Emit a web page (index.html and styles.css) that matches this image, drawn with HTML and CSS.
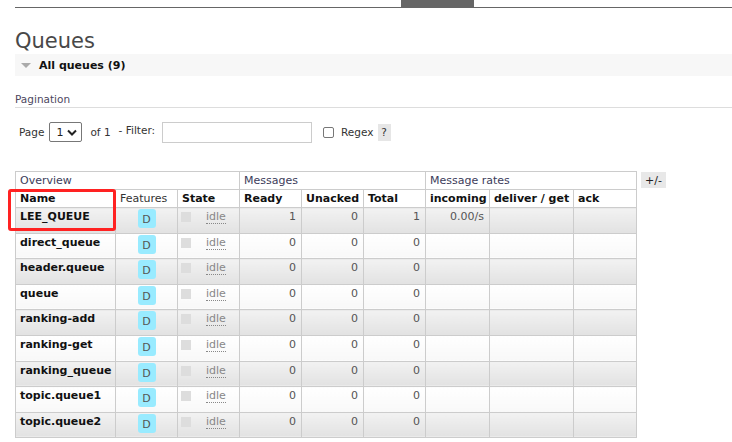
FILE: index.html
```html
<!DOCTYPE html>
<html>
<head>
<meta charset="utf-8">
<link rel="stylesheet" href="styles.css">
</head>
<body>
<div class="topnav"><span class="tab"></span></div>
<div class="main">
  <h1 class="title">Queues</h1>
  <div class="section-head"><span class="tri"></span><span>All queues (9)</span></div>
  <div class="pagination-title">Pagination</div>
  <div class="pager">
    <span>Page</span>
    <span class="select">1 <svg width="10" height="7" viewBox="0 0 10 7"><path d="M1 1.5 L5 5.5 L9 1.5" fill="none" stroke="#222" stroke-width="2"/></svg></span>
    <span class="of">of 1</span>
    <span class="flt">- Filter:</span>
    <span class="input"></span>
    <span class="check"></span>
    <span>Regex</span>
    <span class="help">?</span>
  </div>
  <div class="table-wrap">
    <table class="list">
      <colgroup>
        <col class="c-name"><col class="c-feat"><col class="c-state"><col class="c-num"><col class="c-num"><col class="c-num"><col class="c-inc"><col class="c-del"><col class="c-ack">
      </colgroup>
      <thead>
        <tr class="group"><th colspan="3">Overview</th><th colspan="3">Messages</th><th colspan="3">Message rates</th></tr>
        <tr class="cols"><th>Name</th><th class="light">Features</th><th>State</th><th>Ready</th><th>Unacked</th><th>Total</th><th>incoming</th><th>deliver / get</th><th>ack</th></tr>
      </thead>
      <tbody>
        <tr class="alt1"><td class="name">LEE_QUEUE</td><td class="feat"><span class="badge">D</span></td><td class="state"><span class="sq"></span><span class="idle">idle</span></td><td class="num">1</td><td class="num">0</td><td class="num">1</td><td class="num">0.00/s</td><td></td><td></td></tr>
        <tr class="alt2"><td class="name">direct_queue</td><td class="feat"><span class="badge">D</span></td><td class="state"><span class="sq"></span><span class="idle">idle</span></td><td class="num">0</td><td class="num">0</td><td class="num">0</td><td></td><td></td><td></td></tr>
        <tr class="alt1"><td class="name">header.queue</td><td class="feat"><span class="badge">D</span></td><td class="state"><span class="sq"></span><span class="idle">idle</span></td><td class="num">0</td><td class="num">0</td><td class="num">0</td><td></td><td></td><td></td></tr>
        <tr class="alt2"><td class="name">queue</td><td class="feat"><span class="badge">D</span></td><td class="state"><span class="sq"></span><span class="idle">idle</span></td><td class="num">0</td><td class="num">0</td><td class="num">0</td><td></td><td></td><td></td></tr>
        <tr class="alt1"><td class="name">ranking-add</td><td class="feat"><span class="badge">D</span></td><td class="state"><span class="sq"></span><span class="idle">idle</span></td><td class="num">0</td><td class="num">0</td><td class="num">0</td><td></td><td></td><td></td></tr>
        <tr class="alt2"><td class="name">ranking-get</td><td class="feat"><span class="badge">D</span></td><td class="state"><span class="sq"></span><span class="idle">idle</span></td><td class="num">0</td><td class="num">0</td><td class="num">0</td><td></td><td></td><td></td></tr>
        <tr class="alt1"><td class="name">ranking_queue</td><td class="feat"><span class="badge">D</span></td><td class="state"><span class="sq"></span><span class="idle">idle</span></td><td class="num">0</td><td class="num">0</td><td class="num">0</td><td></td><td></td><td></td></tr>
        <tr class="alt2"><td class="name">topic.queue1</td><td class="feat"><span class="badge">D</span></td><td class="state"><span class="sq"></span><span class="idle">idle</span></td><td class="num">0</td><td class="num">0</td><td class="num">0</td><td></td><td></td><td></td></tr>
        <tr class="alt1"><td class="name">topic.queue2</td><td class="feat"><span class="badge">D</span></td><td class="state"><span class="sq"></span><span class="idle">idle</span></td><td class="num">0</td><td class="num">0</td><td class="num">0</td><td></td><td></td><td></td></tr>
      </tbody>
    </table>
    <span class="plusminus">+/-</span>
    <div class="highlight"></div>
  </div>
</div>
</body>
</html>
```

FILE: styles.css
```css
html, body {
  margin: 0;
  padding: 0;
  background: #fff;
}
body {
  font-family: "DejaVu Sans", Verdana, sans-serif;
  font-size: 11px;
  color: #484848;
}
.topnav {
  margin-left: 15px;
  height: 7px;
  border-bottom: 1px solid #666;
  display: flex;
}
.topnav .tab {
  margin-left: 386px;
  width: 73px;
  height: 7px;
  background: #666;
}
.main {
  padding-left: 15px;
}
.title {
  margin: 0;
  padding-top: 19px;
  font-size: 21px;
  line-height: 28px;
  font-weight: normal;
  color: #484848;
  height: 27px;
}
.section-head {
  height: 22px;
  background: #f7f7f7;
  display: flex;
  align-items: center;
  font-weight: bold;
  color: #111;
  font-size: 11px;
}
.tri {
  width: 0;
  height: 0;
  border-left: 5px solid transparent;
  border-right: 5px solid transparent;
  border-top: 5px solid #aaa;
  margin-left: 6px;
  margin-right: 8px;
}
.pagination-title {
  margin-top: 16px;
  font-size: 10.5px;
  line-height: 14px;
  color: #4d4760;
  border-bottom: 1px solid #ddd;
  padding-bottom: 1px;
}
.pager {
  display: flex;
  align-items: center;
  margin-top: 13px;
  padding-left: 4px;
  font-size: 10.5px;
  color: #333;
  height: 22px;
}
.select {
  margin-left: 5px;
  border: 1px solid #777;
  border-radius: 2px;
  display: flex;
  align-items: center;
  justify-content: space-between;
  padding: 0 4px 0 6px;
  box-sizing: border-box;
  width: 33px;
  height: 20px;
  font-size: 11px;
  color: #222;
}
.of {
  margin-left: 8px;
}
.flt {
  margin-left: 8px;
  position: relative;
  top: -2px;
}
.input {
  margin-left: 7px;
  width: 150px;
  height: 21px;
  border: 1px solid #ccc;
  box-sizing: border-box;
}
.check {
  margin-left: 11px;
  margin-right: 7px;
  width: 11px;
  height: 11px;
  border: 1px solid #777;
  border-radius: 2px;
  box-sizing: border-box;
}
.help {
  margin-left: 4px;
  width: 13px;
  height: 17px;
  background: #e6e6e6;
  display: flex;
  align-items: center;
  justify-content: center;
  color: #333;
}
.table-wrap {
  margin-top: 28px;
  position: relative;
  display: flex;
  align-items: flex-start;
}
.list {
  border-collapse: collapse;
  table-layout: fixed;
  width: 622px;
  font-size: 11px;
}
.c-name { width: 100px; }
.c-feat { width: 62px; }
.c-state { width: 62px; }
.c-num { width: 62px; }
.c-inc { width: 64px; }
.c-del { width: 84px; }
.c-ack { width: 63px; }
.list th, .list td {
  border: 1px solid #ccc;
  padding: 0 4px;
  text-align: left;
  white-space: nowrap;
  overflow: hidden;
}
.list .group th {
  font-weight: normal;
  height: 17px;
  color: #3c3c5a;
}
.list .cols th {
  font-weight: bold;
  height: 17px;
  color: #111;
}
.list .cols th.light {
  font-weight: normal;
  color: #333;
}
.list td {
  height: 25.6px;
  vertical-align: top;
  padding-top: 2px;
  padding-bottom: 0;
  box-sizing: border-box;
  line-height: 14px;
}
.alt1 td {
  background: linear-gradient(#f2f2f2, #e2e2e2);
}
.alt2 td {
  background: linear-gradient(#ffffff, #f8f8f8);
}
.list td.name {
  font-weight: bold;
  color: #111;
}
.list td.num {
  text-align: right;
  color: #555;
  padding-right: 5px;
}
.list td.feat {
  text-align: center;
  padding-top: 1px;
}
.badge {
  display: inline-block;
  width: 18px;
  height: 19px;
  line-height: 21px;
  border-radius: 3px;
  background: #99ebff;
  color: #555;
  text-align: center;
  font-size: 11px;
}
.list td.state {
  padding-left: 3px;
}
.sq {
  display: inline-block;
  width: 10px;
  height: 10px;
  background: #ddd;
  vertical-align: top;
  margin-top: 2px;
}
.idle {
  display: inline-block;
  margin-left: 15px;
  color: #888;
  border-bottom: 1px dotted #888;
  line-height: 13px;
}
.plusminus {
  margin-left: 4px;
  margin-top: 1px;
  width: 25px;
  height: 16px;
  background: #e8e8e8;
  display: flex;
  align-items: center;
  justify-content: center;
  color: #222;
  font-size: 11px;
}
.highlight {
  position: absolute;
  left: -7px;
  top: 18px;
  width: 102px;
  height: 36px;
  border: 3px solid #f22;
  border-radius: 3px;
}
```
